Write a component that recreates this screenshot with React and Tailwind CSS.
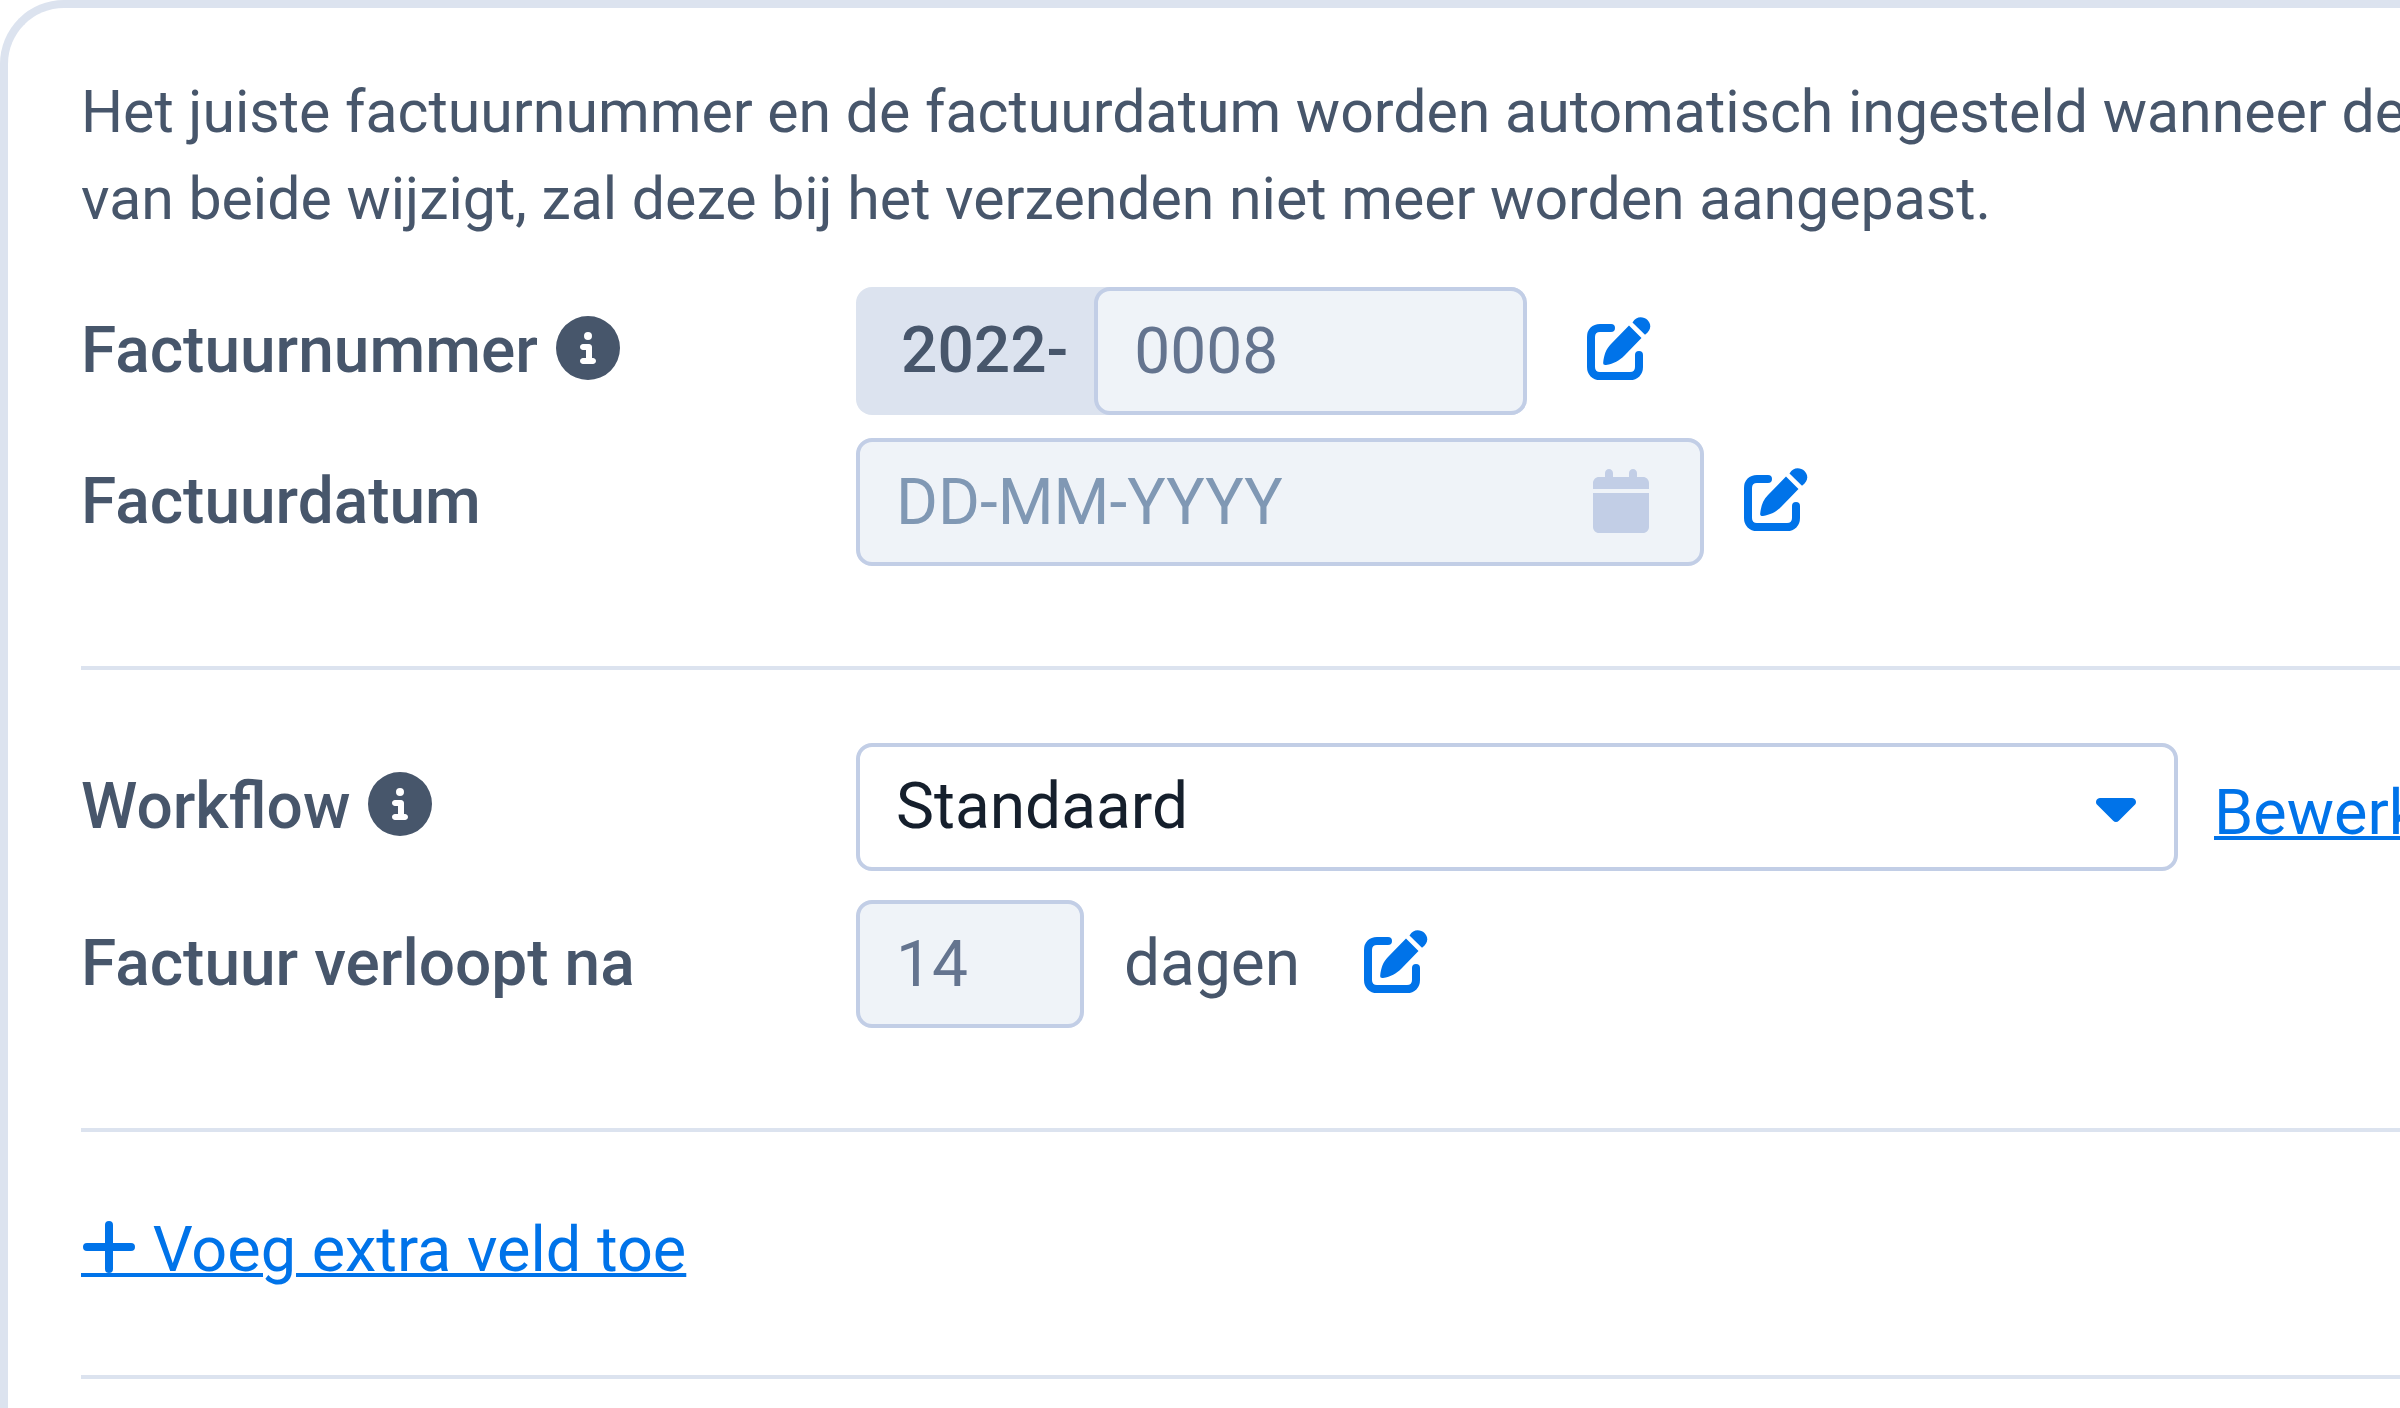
import { FaCalendar, FaCaretDown, FaCircleInfo } from "react-icons/fa6";

const inputStyle =
  "h-32 rounded-[16px] border-4 border-[#c2cee6] bg-[#eff3f8] px-9 text-[64px] leading-none text-[#64748f] placeholder:text-[#8098b4] outline-none";

const linkStyle = "text-[63px] text-[#0073e9] underline decoration-4 underline-offset-[2px]";

function EditButton({ label }) {
  return (
    <button type="button" aria-label={label} className="mb-1.5 shrink-0 cursor-pointer text-[#0073e9]">
      <svg viewBox="0 0 64 64" className="size-16" fill="none">
        <path
          d="M24 12H13C7.5 12 4 15.5 4 21V51C4 56.5 7.5 60 13 60H43C48.5 60 52 56.5 52 51V39"
          stroke="currentColor"
          strokeWidth="8"
          strokeLinecap="round"
          strokeLinejoin="round"
        />
        <path
          d="M42 9.5L54.5 22L37.5 39.5C32 45 27 47.5 19 49C17 49.2 16 48.3 16.2 46.5C17 39 19 33 24 28Z"
          fill="currentColor"
        />
        <path d="M45.5 6.5C49.5 -0.5 56.5 0.5 60.5 4C64.5 8 64.5 14 58 18.7Z" fill="currentColor" />
      </svg>
    </button>
  );
}

// Plus with its own piece of the link underline
function PlusIcon() {
  return (
    <svg viewBox="0 0 56 58" className="inline h-[58px] w-14 align-[-6px]" fill="none">
      <path d="M28 6V50M6 28H50" stroke="currentColor" strokeWidth="8" strokeLinecap="round" />
      <path d="M0 54H56V58H0Z" fill="currentColor" />
    </svg>
  );
}

function Row({ id, label, info, children }) {
  return (
    <div className="flex items-center">
      <div className="flex w-[775px] shrink-0 items-center gap-[18px]">
        <label htmlFor={id} className="font-medium">
          {label}
        </label>
        {info && <FaCircleInfo className="mb-1.5 size-16" />}
      </div>
      {children}
    </div>
  );
}

export default function App() {
  return (
    <div className="h-screen overflow-hidden bg-white">
      <div className="min-h-[1600px] rounded-tl-[64px] border-t-8 border-l-8 border-[#dce3ef] pt-[60px] pl-[73px] font-[Roboto,sans-serif] text-[64px] leading-[76px] text-[#47566b]">
        <p className="text-[59px] leading-[87px] whitespace-nowrap">
          Het juiste factuurnummer en de factuurdatum worden automatisch ingesteld wanneer de
          <br />
          van beide wijzigt, zal deze bij het verzenden niet meer worden aangepast.
        </p>

        {/* Number and date */}
        <div className="mt-[45px] flex flex-col gap-[23px]">
          <Row id="number" label="Factuurnummer" info>
            <div className="flex rounded-[16px] bg-[#dce3ef]">
              <span className="flex items-center pr-[26px] pl-[45px] font-medium">2022-</span>
              <input id="number" type="text" readOnly defaultValue="0008" className={`${inputStyle} w-[433px]`} />
            </div>
            <div className="ml-[60px] flex">
              <EditButton label="Factuurnummer wijzigen" />
            </div>
          </Row>
          <Row id="date" label="Factuurdatum">
            <div className="relative">
              <input id="date" type="text" readOnly placeholder="DD-MM-YYYY" className={`${inputStyle} w-[848px]`} />
              <FaCalendar className="absolute top-[31px] right-[51px] size-16 text-[#c2cee6]" />
            </div>
            <div className="ml-10 flex">
              <EditButton label="Factuurdatum wijzigen" />
            </div>
          </Row>
        </div>

        <hr className="mt-[100px] border-t-4 border-[#dce3ef]" />

        {/* Workflow */}
        <div className="mt-[73px] flex flex-col gap-[29px]">
          <Row id="workflow" label="Workflow" info>
            <div className="relative">
              <select
                id="workflow"
                className="h-32 w-[1322px] appearance-none rounded-[16px] border-4 border-[#c2cee6] bg-white px-9 text-[#151f2c] outline-none"
              >
                <option>Standaard</option>
              </select>
              <FaCaretDown className="pointer-events-none absolute top-[31px] right-[30px] size-16 text-[#0073e9]" />
            </div>
            <a href="#workflow" className={`${linkStyle} ml-9 pt-3`}>
              Bewerken
            </a>
          </Row>
          <Row id="days" label="Factuur verloopt na">
            <input id="days" type="text" readOnly defaultValue="14" className={`${inputStyle} w-[228px]`} />
            <span className="ml-10">dagen</span>
            <div className="ml-16 flex">
              <EditButton label="Vervaltermijn wijzigen" />
            </div>
          </Row>
        </div>

        <hr className="mt-[100px] border-t-4 border-[#dce3ef]" />

        <div className="mt-20">
          <a href="#extra" className={linkStyle}>
            <PlusIcon /> Voeg extra veld toe
          </a>
        </div>

        <hr className="mt-[87px] border-t-4 border-[#dce3ef]" />
      </div>
    </div>
  );
}
